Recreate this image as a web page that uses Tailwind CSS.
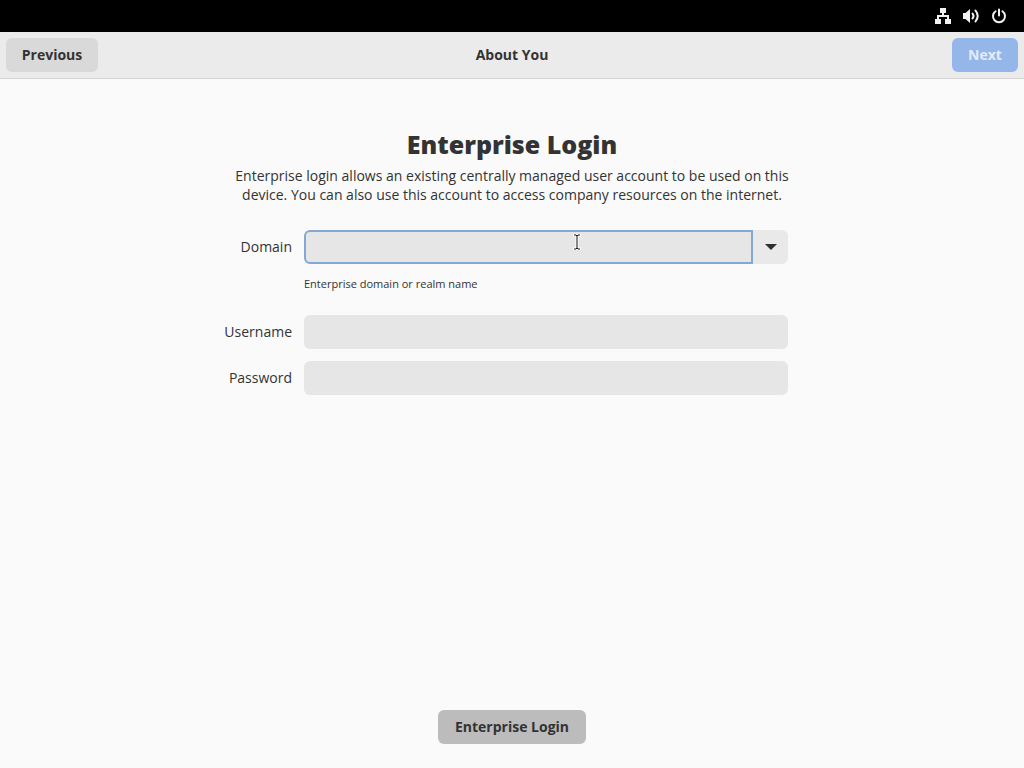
<!DOCTYPE html>
<html lang="en">
<head>
<meta charset="utf-8">
<meta name="viewport" content="width=device-width, initial-scale=1">
<title>About You</title>
<script src="https://cdn.jsdelivr.net/npm/@tailwindcss/browser@4"></script>
</head>
<body class="flex min-h-screen flex-col bg-[#fafafa] font-['Open_Sans','Noto_Sans',sans-serif] text-sm text-[#333333]">
  <div class="flex h-8 items-center justify-end gap-3 bg-black pr-[17px] text-[#f2f2f2]">
    <button type="button" aria-label="Network">
      <svg class="block size-4" viewBox="0 0 16 16" fill="currentColor"><path d="M5 0h6v5H9v2h5v4h2v5h-6v-5h2V9H4v2h2v5H0v-5h2V7h5V5H5z"/></svg>
    </button>
    <button type="button" aria-label="Volume">
      <svg class="block size-4" viewBox="0 0 16 16"><path d="M0 5h2.500L7 1v14L2.500 11H0z" fill="currentColor"/><g fill="none" stroke="currentColor" stroke-linecap="round" stroke-width="2"><path d="M9.500 5.500q2 2.500 0 5"/><path d="M12.500 2.500q4.400 5.500 0 11"/></g></svg>
    </button>
    <button type="button" aria-label="Power">
      <svg class="block size-4" viewBox="0 0 16 16" fill="none" stroke="currentColor" stroke-width="2" stroke-linecap="round"><path d="M8 1.500v6M4.600 3.300a6 6 0 1 0 6.800 0"/></svg>
    </button>
  </div>
  <header class="grid h-[47px] grid-cols-[1fr_auto_1fr] items-center border-b border-[#d5d5d5] bg-[#ebebeb] px-1.5 font-bold">
    <button type="button" class="h-[34px] w-[92px] justify-self-start rounded-md bg-[#d9d9d9]">Previous</button>
    <h1>About You</h1>
    <button type="button" class="h-[34px] w-[66px] justify-self-end rounded-md bg-[#94b6e8] text-[#e3ecf9]">Next</button>
  </header>
  <main class="flex flex-1 flex-col items-center px-4 pt-[47px] pb-6">
    <h2 class="text-[25px] leading-9 font-extrabold">Enterprise Login</h2>
    <p class="mt-1 max-w-[576px] text-center leading-[19px]">Enterprise login allows an existing centrally managed user account to be used on this<br>device. You can also use this account to access company resources on the internet.</p>
    <form class="mt-[26px] grid w-full max-w-[600px] grid-cols-[80px_1fr] items-center gap-x-3 gap-y-3 pr-6 text-right">
      <label for="domain">Domain</label>
      <div class="relative flex h-[34px]">
        <input id="domain" type="text" class="min-w-0 flex-1 rounded-l-md border-2 border-[#82a9d2] bg-[#e6e6e6] px-2 outline-none">
        <button type="button" aria-label="Show domains" class="flex w-[35px] items-center justify-center rounded-r-md bg-[#e9e9e9]">
          <svg class="h-1.5 w-3" viewBox="0 0 12 6" fill="#2e2e2e"><path d="M0 0h12L6 6z"/></svg>
        </button>
        <svg class="absolute top-1 left-[269px] h-4 w-2" viewBox="0 0 8 16" fill="none"><path d="M0 1h3l1 1 1-1h3M0 15h3l1-1 1 1h3M4 2v12" stroke="#fff" stroke-width="3"/><path d="M1 1h2l1 1 1-1h2M1 15h2l1-1 1 1h2M4 2v12" stroke="#111"/></svg>
      </div>
      <p class="col-start-2 mb-[11px] text-left text-[11px] leading-4">Enterprise domain or realm name</p>
      <label for="username">Username</label>
      <input id="username" type="text" class="h-[34px] min-w-0 rounded-md bg-[#e6e6e6] px-2 outline-none">
      <label for="password">Password</label>
      <input id="password" type="password" class="h-[34px] min-w-0 rounded-md bg-[#e6e6e6] px-2 outline-none">
    </form>
    <button type="button" class="mt-auto h-[34px] w-[148px] rounded-md bg-[#bcbcbc] font-bold">Enterprise Login</button>
  </main>
</body>
</html>
